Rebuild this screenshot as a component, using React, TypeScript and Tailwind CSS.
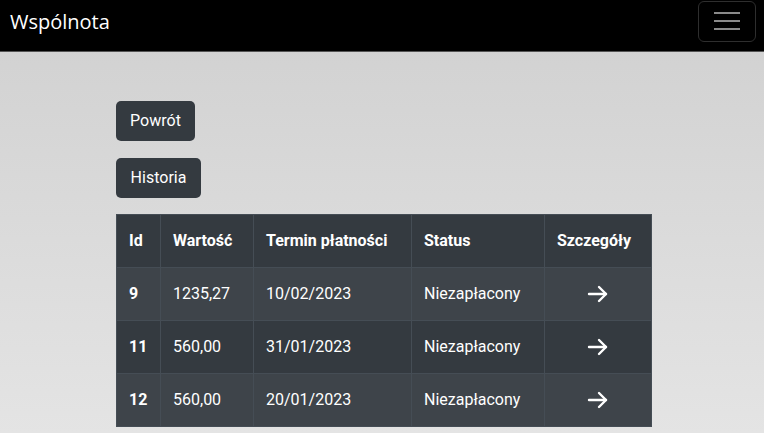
const rows = [
  { id: '9', value: '1235,27', due: '10/02/2023', status: 'Niezapłacony' },
  { id: '11', value: '560,00', due: '31/01/2023', status: 'Niezapłacony' },
  { id: '12', value: '560,00', due: '20/01/2023', status: 'Niezapłacony' },
];

function Arrow() {
  return (
    <svg width="22" height="18" viewBox="0 0 22 18" fill="none" stroke="white" strokeWidth="2.4" strokeLinecap="round" strokeLinejoin="round">
      <path d="M2 9h17" />
      <path d="M12 2l7 7-7 7" />
    </svg>
  );
}

export default function App() {
  return (
    <div className="min-h-[433px] bg-gradient-to-b from-[#d0d0d0] to-[#e4e4e4] font-['Roboto',sans-serif]">
      {/* navbar */}
      <nav className="h-[52px] bg-black border-b border-[#555] flex items-center justify-between pl-[10px] pr-[8px]">
        <span className="text-white text-[20px] font-['Open_Sans',sans-serif] leading-none -mt-[8px]">Wspólnota</span>
        <button className="w-[58px] h-[41px] -mt-[9px] border border-[#2e2e2e] rounded-[6px] flex flex-col items-center justify-center gap-[6px]">
          <span className="block w-[26px] h-[2px] bg-[#8a8a8a]" />
          <span className="block w-[26px] h-[2px] bg-[#8a8a8a]" />
          <span className="block w-[26px] h-[2px] bg-[#8a8a8a]" />
        </button>
      </nav>

      <main className="pl-[116px] pt-[49px] flex flex-col items-start">
        <button className="h-[40px] w-[79px] rounded-[5px] bg-[#343a40] text-white text-[16px]">Powrót</button>
        <button className="mt-[17px] h-[40px] w-[85px] rounded-[5px] bg-[#343a40] text-white text-[16px]">Historia</button>

        <table className="mt-[16px] w-[535px] border border-[#a9adb1] border-collapse text-white text-[16px] table-fixed">
          <colgroup>
            <col className="w-[44px]" />
            <col className="w-[93px]" />
            <col className="w-[158px]" />
            <col className="w-[133px]" />
            <col className="w-[107px]" />
          </colgroup>
          <thead>
            <tr className="h-[53px] bg-[#343a40]">
              {['Id', 'Wartość', 'Termin płatności', 'Status', 'Szczegóły'].map((h) => (
                <th key={h} className="border border-[#454d55] px-[12px] text-left font-bold whitespace-nowrap">
                  {h}
                </th>
              ))}
            </tr>
          </thead>
          <tbody>
            {rows.map((r, i) => (
              <tr key={r.id} className={`h-[53px] ${i % 2 === 0 ? 'bg-[#3e444a]' : 'bg-[#343a40]'}`}>
                <td className="border border-[#454d55] px-[12px] font-bold">{r.id}</td>
                <td className="border border-[#454d55] px-[12px]">{r.value}</td>
                <td className="border border-[#454d55] px-[12px]">{r.due}</td>
                <td className="border border-[#454d55] px-[12px]">{r.status}</td>
                <td className="border border-[#454d55] px-[12px]">
                  <div className="flex justify-center">
                    <Arrow />
                  </div>
                </td>
              </tr>
            ))}
          </tbody>
        </table>
      </main>
    </div>
  );
}
